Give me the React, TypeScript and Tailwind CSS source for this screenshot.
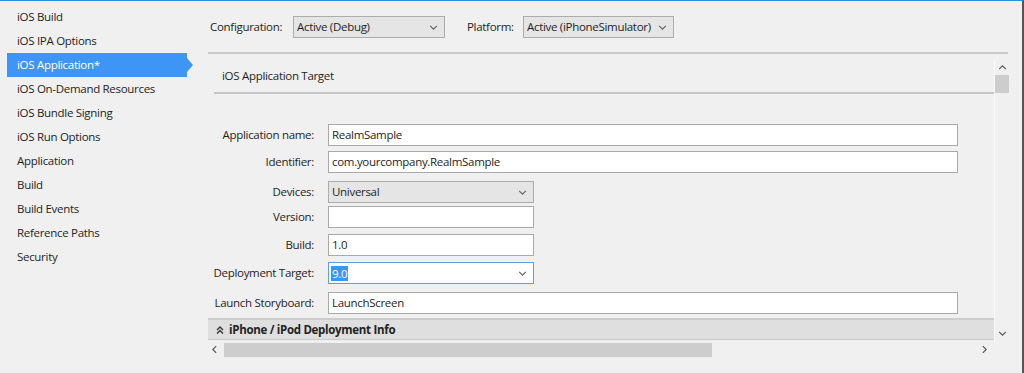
import { ReactNode } from "react";

const navItems = [
  "iOS Build",
  "iOS IPA Options",
  "iOS Application*",
  "iOS On-Demand Resources",
  "iOS Bundle Signing",
  "iOS Run Options",
  "Application",
  "Build",
  "Build Events",
  "Reference Paths",
  "Security",
];

const Chevron = ({ dir = "down", className = "" }: { dir?: "down" | "up" | "left" | "right"; className?: string }) => {
  const pts = {
    down: "1,1 5,5 9,1",
    up: "1,5 5,1 9,5",
    left: "5,1 1,5 5,9",
    right: "1,1 5,5 1,9",
  }[dir];
  const box = dir === "down" || dir === "up" ? "0 0 10 6" : "0 0 6 10";
  return (
    <svg viewBox={box} className={className} fill="none" stroke="currentColor" strokeWidth="1.4">
      <polyline points={pts} />
    </svg>
  );
};

const Combo = ({ value, className = "" }: { value: string; className?: string }) => (
  <div className={`flex items-center h-[22px] bg-[#e5e5e5] border border-[#acacac] pl-[3px] pr-[6px] ${className}`}>
    <span className="flex-1 truncate">{value}</span>
    <Chevron className="w-[9px] h-[5px] text-[#666] shrink-0 ml-[4px]" />
  </div>
);

const Row = ({ label, mt, children }: { label: string; mt: string; children: ReactNode }) => (
  <div className={`flex items-center ${mt}`}>
    <div className="w-[120px] shrink-0 pr-[14px] text-right">{label}</div>
    {children}
  </div>
);

const TextBox = ({ value = "", className = "" }: { value?: string; className?: string }) => (
  <div className={`h-[22px] bg-white border border-[#a9a9a9] flex items-center pl-[3px] ${className}`}>{value}</div>
);

export default function App() {
  return (
    <div
      className="w-[1024px] h-[373px] overflow-hidden flex bg-[#f0f0f0] border-t border-t-[#2b8ee0] border-r-2 border-r-[#555] text-[11.5px] tracking-[-0.3px] text-[#1e1e1e]"
      style={{ fontFamily: '"Open Sans", "Noto Sans", sans-serif' }}
    >
      {/* side navigation */}
      <aside className="w-[194px] shrink-0 pt-[4px]">
        {navItems.map((item, i) => {
          const active = i === 2;
          return (
            <div key={item} className="relative h-[24px] flex items-center">
              {active ? (
                <div className="ml-[7px] w-[180px] h-[24px] bg-[#3d95f5] text-white flex items-center pl-[10px] relative">
                  {item}
                  <div className="absolute right-[-6px] top-[5px] w-0 h-0 border-y-[7px] border-y-transparent border-l-[6px] border-l-[#3d95f5]" />
                </div>
              ) : (
                <span className="pl-[17px]">{item}</span>
              )}
            </div>
          );
        })}
      </aside>

      {/* main area */}
      <main className="w-[814px] pl-[14px] flex flex-col">
        <div className="flex items-center h-[22px] mt-[15px] w-[800px]">
          <span className="w-[85px] pl-[2px]">Configuration:</span>
          <Combo value="Active (Debug)" className="w-[152px]" />
          <span className="ml-[22px] w-[56px]">Platform:</span>
          <Combo value="Active (iPhoneSimulator)" className="w-[151px]" />
        </div>
        <div className="mt-[14px] h-[2px] w-[800px] bg-[#c9c9c9]" />

        <div className="flex w-[801px] h-[288px]">
          <div className="w-[786px] flex flex-col">
            <div className="h-[38px] flex items-end pb-[8px] pl-[14px]">iOS Application Target</div>
            <div className="ml-[6px] h-[2px] bg-[#c6c6c6]" />

            <Row label="Application name:" mt="mt-[30px]">
              <TextBox value="RealmSample" className="w-[630px]" />
            </Row>
            <Row label="Identifier:" mt="mt-[5px]">
              <TextBox value="com.yourcompany.RealmSample" className="w-[630px]" />
            </Row>
            <Row label="Devices:" mt="mt-[8px]">
              <Combo value="Universal" className="w-[206px]" />
            </Row>
            <Row label="Version:" mt="mt-[3px]">
              <TextBox className="w-[206px] h-[21px]" />
            </Row>
            <Row label="Build:" mt="mt-[6px]">
              <TextBox value="1.0" className="w-[206px]" />
            </Row>
            <Row label="Deployment Target:" mt="mt-[6px]">
              <div className="w-[206px] h-[22px] bg-white border border-[#5aa0e6] flex items-center pl-[2px] pr-[6px]">
                <span className="bg-[#3399ff] text-white px-[1px] leading-[15px]">9.0</span>
                <span className="flex-1" />
                <Chevron className="w-[9px] h-[5px] text-[#666]" />
              </div>
            </Row>
            <Row label="Launch Storyboard:" mt="mt-[8px]">
              <TextBox value="LaunchScreen" className="w-[630px]" />
            </Row>

            <div className="mt-[4px] h-[22px] bg-[#dfdfdf] border-t-2 border-t-[#cdcdcd] border-b border-b-[#c8c8c8] flex items-center pl-[8px] font-bold text-[#222]">
              <svg viewBox="0 0 8 8" className="w-[8px] h-[8px] mr-[5px]" fill="none" stroke="#333" strokeWidth="1.4">
                <polyline points="1,4 4,1 7,4" />
                <polyline points="1,7.5 4,4.5 7,7.5" />
              </svg>
              iPhone / iPod Deployment Info
            </div>
          </div>

          {/* vertical scrollbar */}
          <div className="w-[15px] mt-[5px] border-l border-l-[#f8f8f8] flex flex-col items-center">
            <Chevron dir="up" className="w-[9px] h-[5px] mt-[6px] text-[#555]" />
            <div className="mt-[5px] w-[14px] h-[18px] bg-[#cdcdcd]" />
            <div className="flex-1" />
            <Chevron dir="down" className="w-[9px] h-[5px] mb-[6px] text-[#555]" />
          </div>
        </div>

        {/* horizontal scrollbar */}
        <div className="w-[786px] h-[15px] flex items-center">
          <Chevron dir="left" className="w-[5px] h-[9px] ml-[4px] text-[#555]" />
          <div className="ml-[7px] w-[488px] h-[14px] bg-[#cdcdcd]" />
          <div className="flex-1" />
          <Chevron dir="right" className="w-[5px] h-[9px] mr-[7px] text-[#555]" />
        </div>
      </main>
    </div>
  );
}
